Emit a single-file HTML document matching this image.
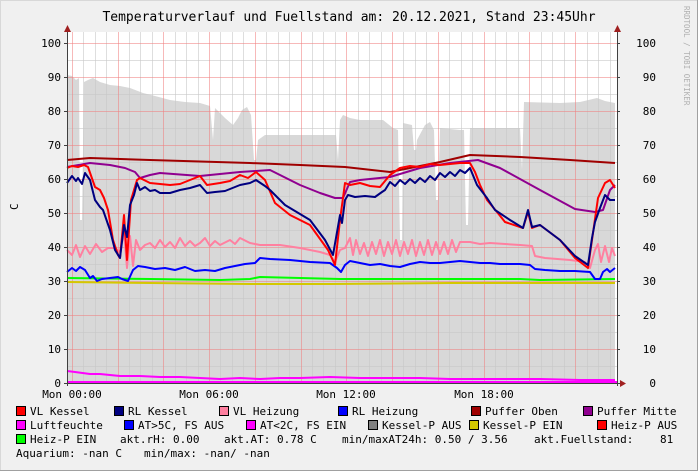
<!DOCTYPE html>
<html><head><meta charset="utf-8"><style>
html,body{margin:0;padding:0;background:#f0f0f0;}
svg{display:block}
text{font-family:"DejaVu Sans Mono","Liberation Mono",monospace;}
</style></head><body>
<svg width="698" height="471" viewBox="0 0 698 471" xmlns="http://www.w3.org/2000/svg">
<rect x="0" y="0" width="698" height="471" fill="#f0f0f0"/>
<path d="M0.5 470.5V0.5H697.5" stroke="#d8d8d8" fill="none"/>
<path d="M697.5 0V470.5H0" stroke="#a0a0a0" fill="none"/>
<text x="349" y="21" font-size="13" text-anchor="middle" fill="#000">Temperaturverlauf und Fuellstand am: 20.12.2021, Stand 23:45Uhr</text>
<text transform="translate(684,6) rotate(90)" font-size="7.5" fill="#b0b0b0">RRDTOOL / TOBI OETIKER</text>
<text transform="translate(18,210) rotate(-90)" font-size="11" fill="#000">C</text>
<!-- plot area -->
<rect x="67" y="32" width="550" height="351" fill="#fff"/>
<!-- gray area -->
<polygon fill="#d8d8d8" points="67,383 67,75 72,76 76,80 79,78 80,220 82,220 84,82 88,80 93,78 100,82 110,85 120,86 130,88 143,93 155,96 170,100 185,102 200,103 210,106 213,140 215,108 225,118 233,125 238,118 242,110 247,107 251,115 254,160 256,160 258,140 265,135 300,135 336,135 338,160 340,120 343,115 350,118 360,120 383,120 393,128 398,130 400,240 402,240 403,123 412,125 414,150 416,150 417,140 425,125 430,122 434,130 436,200 438,200 440,128 460,130 464,130 466,225 468,225 470,128 520,128 522,170 524,102 560,103 580,102 597,98 605,101 615,103 615,383"/>
<!-- grid -->
<g stroke="#e0e0e0" stroke-width="1">
<path d="M67 366.5H617M67 332.5H617M67 298.5H617M67 264.5H617M67 230.5H617M67 196.5H617M67 162.5H617M67 128.5H617M67 94.5H617M67 60.5H617" stroke="#c8c8c8" stroke-opacity="0.6"/>
</g>
<g stroke="#c8c8c8" stroke-opacity="0.6" id="vminor"></g>
<g stroke="#c8c8c8" stroke-opacity="0.6">
<path d="M83.5 32V383M95.5 32V383M106.5 32V383M129.5 32V383M140.5 32V383M152.5 32V383M175.5 32V383M186.5 32V383M198.5 32V383M220.5 32V383M232.5 32V383M243.5 32V383M266.5 32V383M278.5 32V383M289.5 32V383M312.5 32V383M323.5 32V383M335.5 32V383M358.5 32V383M369.5 32V383M381.5 32V383M403.5 32V383M415.5 32V383M426.5 32V383M449.5 32V383M461.5 32V383M472.5 32V383M495.5 32V383M506.5 32V383M518.5 32V383M541.5 32V383M552.5 32V383M564.5 32V383M587.5 32V383M598.5 32V383M610.5 32V383"/>
</g>
<g stroke="#f08080" stroke-opacity="0.55">
<path d="M67 349.5H617M67 315.5H617M67 281.5H617M67 247.5H617M67 213.5H617M67 179.5H617M67 145.5H617M67 111.5H617M67 77.5H617M67 43.5H617"/>
<path d="M72.5 32V383M118.5 32V383M163.5 32V383M209.5 32V383M255.5 32V383M301.5 32V383M346.5 32V383M392.5 32V383M438.5 32V383M484.5 32V383M529.5 32V383M575.5 32V383"/>
</g>
<!-- series -->
<g fill="none" stroke-width="2" stroke-linejoin="round">
<polyline stroke="#d4c800" points="67,282 150,283 250,284 330,284 450,283 530,283 615,283"/>
<polyline stroke="#00ff00" points="67,278 150,279 220,280 250,279 260,277 340,279 450,279 520,279 540,280 615,279"/>
<polyline stroke="#ff80a0" points="67,250 72,255 76,245 80,257 85,246 90,254 96,244 102,252 108,248 115,248 120,252 124,232 127,268 130,236 133,266 136,240 140,250 145,245 150,243 155,248 160,240 165,247 170,242 175,248 180,238 185,246 190,241 195,246 200,243 205,238 210,246 215,241 220,245 230,240 235,244 240,238 250,243 260,245 280,245 300,248 320,252 330,255 335,262 340,250 345,248 350,238 353,255 356,240 360,254 364,243 368,256 372,242 376,254 380,240 384,256 388,242 392,254 396,240 400,256 404,242 408,254 412,240 416,256 420,242 424,255 428,240 432,255 436,242 440,254 444,242 448,254 452,240 456,252 460,242 470,242 480,244 490,243 520,245 532,246 535,256 545,258 570,260 585,262 590,268 595,250 598,244 601,262 605,246 609,262 612,248 615,256"/>
<polyline stroke="#0000ff" points="67,272 72,268 76,271 80,267 85,270 90,278 93,276 97,281 102,279 110,278 118,277 122,279 128,281 133,270 138,266 145,267 155,269 165,268 175,270 185,267 195,271 205,270 215,271 225,268 235,266 245,264 255,263 260,258 270,259 290,260 310,262 330,263 337,268 341,272 345,265 350,261 360,263 370,265 380,264 390,266 400,267 410,264 420,262 430,263 440,263 450,262 460,261 470,262 480,263 490,263 500,264 520,264 530,265 535,269 545,270 560,271 575,271 590,272 595,279 600,279 603,272 607,269 610,272 615,268"/>
<polyline stroke="#a00000" points="67,160 90,158 150,160 250,163 300,165 345,167 390,172 410,168 440,162 470,155 520,157 570,160 615,163"/>
<polyline stroke="#900090" points="67,167 90,163 110,165 125,168 135,172 140,178 150,175 160,173 200,176 240,172 270,170 300,185 320,193 335,198 343,198 350,182 360,180 390,177 420,168 450,163 478,160 500,168 540,190 575,209 595,212 603,210 610,190 615,185"/>
<polyline stroke="#ff0000" points="67,168 72,166 78,167 84,165 88,167 95,187 100,190 104,198 108,210 113,240 118,255 120,258 124,215 127,260 131,200 137,180 140,178 150,183 160,184 170,185 180,184 190,180 200,176 207,185 220,183 230,181 240,175 248,178 256,172 265,180 275,203 290,215 310,225 328,250 335,265 340,220 345,183 350,185 360,183 370,186 380,187 390,175 400,168 410,166 420,167 430,164 440,165 450,164 460,163 470,163 475,172 480,185 487,200 497,212 505,222 523,228 528,212 532,228 540,225 560,240 575,258 588,268 592,240 598,198 605,183 610,180 615,188"/>
<polyline stroke="#000080" points="67,183 72,176 76,181 78,178 82,184 85,173 90,180 95,200 100,207 103,210 110,230 115,250 120,258 124,225 127,237 130,205 134,195 137,183 140,190 145,187 150,191 155,190 160,193 170,193 180,190 190,188 200,185 207,193 215,192 225,191 240,185 250,183 256,180 265,186 270,190 285,205 310,220 325,240 333,255 340,215 342,223 345,200 348,195 355,197 365,196 375,197 382,192 385,190 390,182 395,186 400,180 405,184 410,179 415,183 420,178 425,182 430,176 435,180 440,173 445,177 450,172 455,176 460,170 465,173 470,168 477,185 487,198 495,210 510,220 523,228 528,210 532,227 540,225 560,240 575,256 588,265 592,238 595,222 600,208 605,195 610,200 615,200"/>
<polyline stroke="#ff00ff" points="67,371 75,372 90,374 100,374 120,376 140,376 160,377 180,377 200,378 220,379 240,378 260,379 280,378 300,378 330,377 360,378 390,378 420,378 450,379 480,379 510,379 540,379 580,380 615,380"/>
<line x1="67" y1="382" x2="617" y2="382" stroke="#ff00ff"/>
</g>
<!-- axes -->
<g stroke="#404040">
<line x1="67.5" y1="30" x2="67.5" y2="386"/>
<line x1="617.5" y1="30" x2="617.5" y2="386"/>
<line x1="64" y1="383.5" x2="622" y2="383.5"/>
</g>
<polygon points="64,32 71,32 67.5,25" fill="#a02020"/>
<polygon points="614,32 621,32 617.5,25" fill="#a02020"/>
<polygon points="620,380 620,387 626,383.5" fill="#a02020"/>
<g stroke="#404040">
<path d="M64 43.5H67M64 77.5H67M64 111.5H67M64 145.5H67M64 179.5H67M64 213.5H67M64 247.5H67M64 281.5H67M64 315.5H67M64 349.5H67"/>
<path d="M617 43.5H620M617 77.5H620M617 111.5H620M617 145.5H620M617 179.5H620M617 213.5H620M617 247.5H620M617 281.5H620M617 315.5H620M617 349.5H620"/>
</g>
<g font-size="11" fill="#000" text-anchor="end">
<text x="61" y="47">100</text><text x="61" y="81">90</text><text x="61" y="115">80</text><text x="61" y="149">70</text><text x="61" y="183">60</text><text x="61" y="217">50</text><text x="61" y="251">40</text><text x="61" y="285">30</text><text x="61" y="319">20</text><text x="61" y="353">10</text><text x="61" y="387">0</text>
</g>
<g font-size="11" fill="#000" text-anchor="end">
<text x="656" y="47">100</text><text x="656" y="81">90</text><text x="656" y="115">80</text><text x="656" y="149">70</text><text x="656" y="183">60</text><text x="656" y="217">50</text><text x="656" y="251">40</text><text x="656" y="285">30</text><text x="656" y="319">20</text><text x="656" y="353">10</text><text x="656" y="387">0</text>
</g>
<g font-size="11" fill="#000" text-anchor="middle">
<text x="72" y="398">Mon 00:00</text><text x="209" y="398">Mon 06:00</text><text x="346" y="398">Mon 12:00</text><text x="484" y="398">Mon 18:00</text>
</g>
<!-- legend -->
<g stroke="#000" stroke-width="1">
<rect x="16.5" y="406.5" width="9" height="9" fill="#ff0000"/>
<rect x="114.5" y="406.5" width="9" height="9" fill="#000080"/>
<rect x="219.5" y="406.5" width="9" height="9" fill="#ff80a0"/>
<rect x="338.5" y="406.5" width="9" height="9" fill="#0000ff"/>
<rect x="471.5" y="406.5" width="9" height="9" fill="#a00000"/>
<rect x="583.5" y="406.5" width="9" height="9" fill="#900090"/>
<rect x="16.5" y="420.5" width="9" height="9" fill="#ff00ff"/>
<rect x="124.5" y="420.5" width="9" height="9" fill="#0000ff"/>
<rect x="246.5" y="420.5" width="9" height="9" fill="#ff00ff"/>
<rect x="368.5" y="420.5" width="9" height="9" fill="#808080"/>
<rect x="469.5" y="420.5" width="9" height="9" fill="#d4c800"/>
<rect x="597.5" y="420.5" width="9" height="9" fill="#ff0000"/>
<rect x="16.5" y="434.5" width="9" height="9" fill="#00ff00"/>
</g>
<g font-size="11" fill="#000" xml:space="preserve">
<text x="30" y="415">VL Kessel</text>
<text x="128" y="415">RL Kessel</text>
<text x="233" y="415">VL Heizung</text>
<text x="352" y="415">RL Heizung</text>
<text x="485" y="415">Puffer Oben</text>
<text x="597" y="415">Puffer Mitte</text>
<text x="30" y="429">Luftfeuchte</text>
<text x="138" y="429">AT&gt;5C, FS AUS</text>
<text x="260" y="429">AT&lt;2C, FS EIN</text>
<text x="382" y="429">Kessel-P AUS</text>
<text x="483" y="429">Kessel-P EIN</text>
<text x="611" y="429">Heiz-P AUS</text>
<text x="30" y="443">Heiz-P EIN</text>
<text x="120" y="443">akt.rH: 0.00</text>
<text x="224" y="443">akt.AT: 0.78 C</text>
<text x="342" y="443">min/maxAT24h: 0.50 / 3.56</text>
<text x="534" y="443">akt.Fuellstand:</text>
<text x="660" y="443">81</text>
<text x="16" y="457">Aquarium: -nan C</text>
<text x="144" y="457">min/max: -nan/ -nan</text>
</g>
</svg>
</body></html>
